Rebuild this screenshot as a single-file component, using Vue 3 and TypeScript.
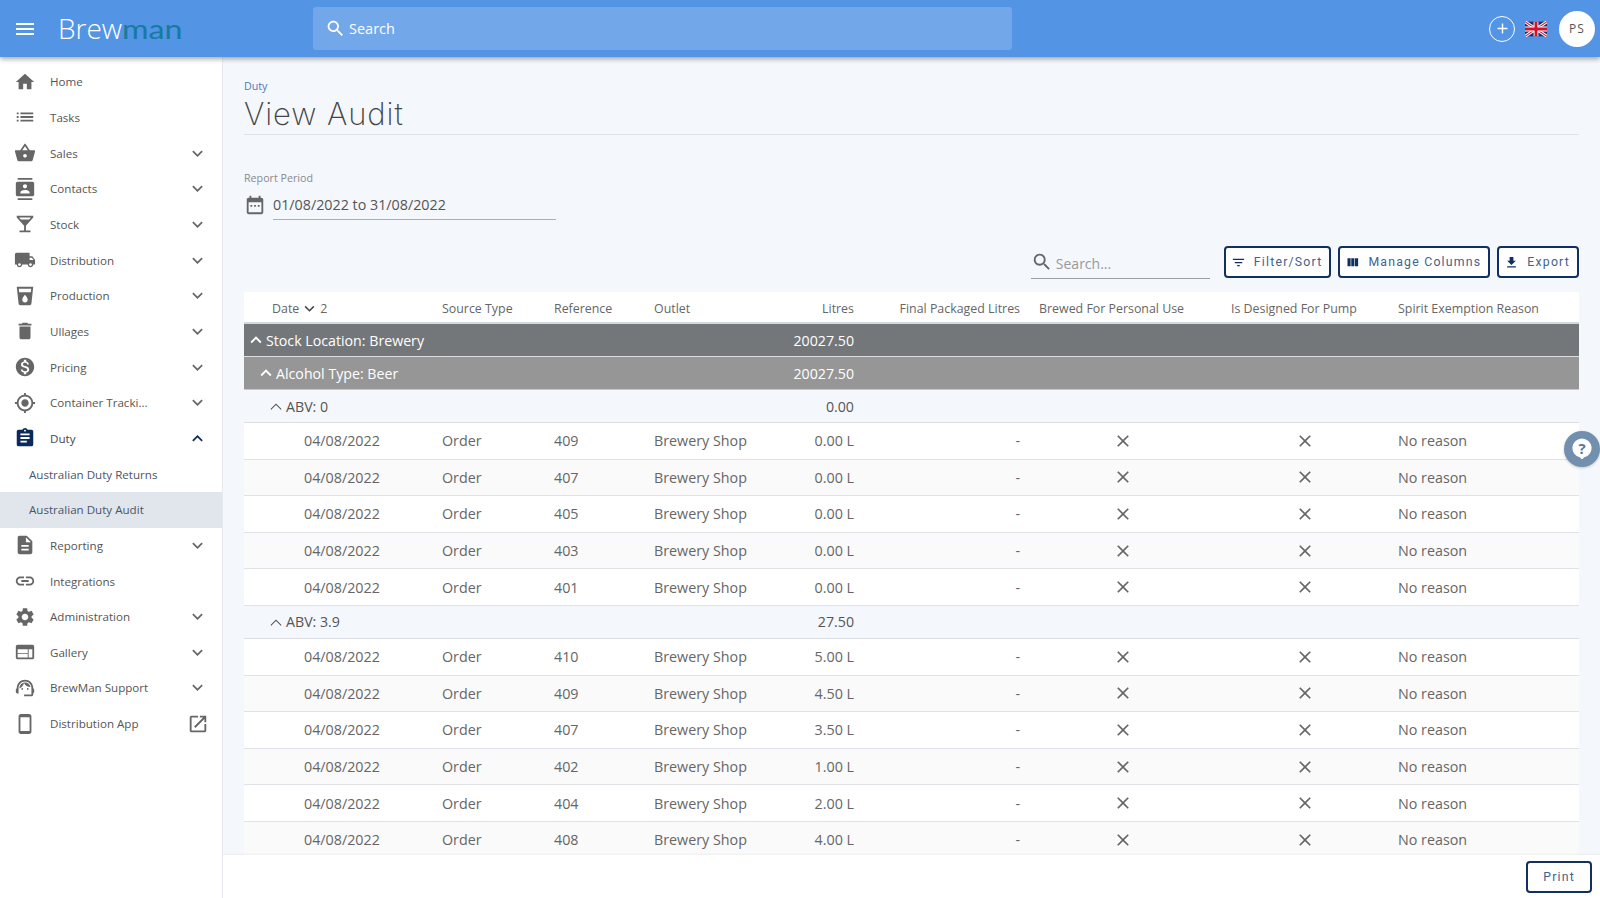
<script setup lang="ts">
interface NavItem { label: string; icon: string; chevron?: 'down' | 'up'; sub?: boolean; active?: boolean; ext?: boolean; dark?: boolean }
interface Row { kind: 'row'; ref: string; litres: string }
interface Group { kind: 'group'; level: 0 | 1 | 2; label: string; total: string }

const P: Record<string, string> = {
  menu: 'M3 18h18v-2H3v2zm0-5h18v-2H3v2zm0-7v2h18V6H3z',
  home: 'M10 20v-6h4v6h5v-8h3L12 3 2 12h3v8z',
  list: 'M3 13h2v-2H3v2zm0 4h2v-2H3v2zm0-8h2V7H3v2zm4 4h14v-2H7v2zm0 4h14v-2H7v2zM7 7v2h14V7H7z',
  basket: 'M17.21 9l-4.38-6.56c-.19-.28-.51-.42-.83-.42-.32 0-.64.14-.83.43L6.79 9H2c-.55 0-1 .45-1 1 0 .09.01.18.04.27l2.54 9.27c.23.84 1 1.46 1.92 1.46h13c.92 0 1.69-.62 1.93-1.46l2.54-9.27L23 10c0-.55-.45-1-1-1h-4.79zM9 9l3-4.4L15 9H9zm3 8c-1.1 0-2-.9-2-2s.9-2 2-2 2 .9 2 2-.9 2-2 2z',
  contacts: 'M20 0H4v2h16V0zM4 24h16v-2H4v2zM20 4H4c-1.1 0-2 .9-2 2v12c0 1.1.9 2 2 2h16c1.1 0 2-.9 2-2V6c0-1.1-.9-2-2-2zm-8 2.75c1.24 0 2.25 1.01 2.25 2.25s-1.01 2.25-2.25 2.25S9.75 10.24 9.75 9 10.76 6.75 12 6.75zM17 17H7v-1.5c0-1.67 3.33-2.5 5-2.5s5 .83 5 2.5V17z',
  bar: 'M21 5V3H3v2l8 9v5H6v2h12v-2h-5v-5l8-9zM7.43 7L5.66 5h12.69l-1.78 2H7.43z',
  truck: 'M20 8h-3V4H3c-1.1 0-2 .9-2 2v11h2c0 1.66 1.34 3 3 3s3-1.34 3-3h6c0 1.66 1.34 3 3 3s3-1.34 3-3h2v-5l-3-4zM6 18.5c-.83 0-1.5-.67-1.5-1.5s.67-1.5 1.5-1.5 1.5.67 1.5 1.5-.67 1.5-1.5 1.5zm13.5-9l1.96 2.5H17V9.5h2.5zm-1.5 9c-.83 0-1.5-.67-1.5-1.5s.67-1.5 1.5-1.5 1.5.67 1.5 1.5-.67 1.5-1.5 1.5z',
  drink: 'M3 2l2.01 18.23C5.13 21.23 5.97 22 7 22h10c1.03 0 1.87-.77 1.99-1.77L21 2H3zm9 17c-1.66 0-3-1.34-3-3 0-2 3-5.4 3-5.4s3 3.4 3 5.4c0 1.66-1.34 3-3 3zm6.33-11H5.67l-.44-4h13.53l-.43 4z',
  trash: 'M6 19c0 1.1.9 2 2 2h8c1.1 0 2-.9 2-2V7H6v12zM19 4h-3.5l-1-1h-5l-1 1H5v2h14V4z',
  money: 'M12 2C6.48 2 2 6.48 2 12s4.48 10 10 10 10-4.48 10-10S17.52 2 12 2zm1.41 16.09V20h-2.67v-1.93c-1.71-.36-3.16-1.46-3.27-3.4h1.96c.1 1.05.82 1.87 2.65 1.87 1.96 0 2.4-.98 2.4-1.59 0-.83-.44-1.61-2.67-2.14-2.48-.6-4.18-1.62-4.18-3.67 0-1.72 1.39-2.84 3.11-3.21V4h2.67v1.95c1.86.45 2.79 1.86 2.87 3.39H14.3c-.05-1.11-.64-1.87-2.22-1.87-1.5 0-2.4.68-2.4 1.64 0 .84.65 1.39 2.67 1.91s4.18 1.39 4.18 3.91c-.01 1.83-1.38 2.83-3.12 3.16z',
  gps: 'M12 8c-2.21 0-4 1.79-4 4s1.79 4 4 4 4-1.79 4-4-1.79-4-4-4zm8.94 3c-.46-4.17-3.77-7.48-7.94-7.94V1h-2v2.06C6.83 3.52 3.52 6.83 3.06 11H1v2h2.06c.46 4.17 3.77 7.48 7.94 7.94V23h2v-2.06c4.17-.46 7.48-3.77 7.94-7.94H23v-2h-2.06zM12 19c-3.87 0-7-3.13-7-7s3.13-7 7-7 7 3.13 7 7-3.13 7-7 7z',
  assign: 'M19 3h-4.18C14.4 1.84 13.3 1 12 1c-1.3 0-2.4.84-2.82 2H5c-1.1 0-2 .9-2 2v14c0 1.1.9 2 2 2h14c1.1 0 2-.9 2-2V5c0-1.1-.9-2-2-2zm-7 0c.55 0 1 .45 1 1s-.45 1-1 1-1-.45-1-1 .45-1 1-1zm2 14H7v-2h7v2zm3-4H7v-2h10v2zm0-4H7V7h10v2z',
  doc: 'M14 2H6c-1.1 0-1.99.9-1.99 2L4 20c0 1.1.89 2 1.99 2H18c1.1 0 2-.9 2-2V8l-6-6zm2 16H8v-2h8v2zm0-4H8v-2h8v2zm-3-5V3.5L18.5 9H13z',
  link: 'M3.9 12c0-1.71 1.39-3.1 3.1-3.1h4V7H7c-2.76 0-5 2.24-5 5s2.24 5 5 5h4v-1.9H7c-1.71 0-3.1-1.39-3.1-3.1zM8 13h8v-2H8v2zm9-6h-4v1.9h4c1.71 0 3.1 1.39 3.1 3.1s-1.39 3.1-3.1 3.1h-4V17h4c2.76 0 5-2.24 5-5s-2.24-5-5-5z',
  gear: 'M19.14 12.94c.04-.3.06-.61.06-.94 0-.32-.02-.64-.07-.94l2.03-1.58c.18-.14.23-.41.12-.61l-1.92-3.32c-.12-.22-.37-.29-.59-.22l-2.39.96c-.5-.38-1.03-.7-1.62-.94l-.36-2.54c-.04-.24-.24-.41-.48-.41h-3.84c-.24 0-.43.17-.47.41l-.36 2.54c-.59.24-1.13.57-1.62.94l-2.39-.96c-.22-.08-.47 0-.59.22L2.74 8.87c-.12.21-.08.47.12.61l2.03 1.58c-.05.3-.09.63-.09.94s.02.64.07.94l-2.03 1.58c-.18.14-.23.41-.12.61l1.92 3.32c.12.22.37.29.59.22l2.39-.96c.5.38 1.03.7 1.62.94l.36 2.54c.05.24.24.41.48.41h3.84c.24 0 .44-.17.47-.41l.36-2.54c.59-.24 1.13-.56 1.62-.94l2.39.96c.22.08.47 0 .59-.22l1.92-3.32c.12-.22.07-.47-.12-.61l-2.01-1.58zM12 15.6c-1.98 0-3.6-1.62-3.6-3.6s1.62-3.6 3.6-3.6 3.6 1.62 3.6 3.6-1.62 3.6-3.6 3.6z',
  web: 'M20 4H4c-1.1 0-1.99.9-1.99 2L2 18c0 1.1.9 2 2 2h16c1.1 0 2-.9 2-2V6c0-1.1-.9-2-2-2zm-5 14H4v-4h11v4zm0-5H4V9h11v4zm5 5h-4V9h4v9z',
  agent: 'M21 12.22C21 6.73 16.74 3 12 3c-4.69 0-9 3.65-9 9.28-.6.34-1 .98-1 1.72v2c0 1.1.9 2 2 2h1v-6.1c0-3.87 3.13-7 7-7s7 3.13 7 7V19h-8v2h8c1.1 0 2-.9 2-2v-1.22c.59-.31 1-.92 1-1.62v-2.3c0-.67-.41-1.28-1-1.64zM9 12a1 1 0 1 0 0 2 1 1 0 0 0 0-2zm6 0a1 1 0 1 0 0 2 1 1 0 0 0 0-2zM18 11.03C17.52 8.18 15.04 6 12.05 6c-3.03 0-6.29 2.51-6.03 6.45 2.47-1.01 4.33-3.21 4.86-5.89 1.31 2.63 4 4.44 7.12 4.47z',
  phone: 'M16.5 1h-9C6.12 1 5 2.12 5 3.5v17C5 21.88 6.12 23 7.5 23h9c1.38 0 2.5-1.12 2.5-2.5v-17C19 2.12 17.88 1 16.5 1zM17 19.5H7v-15h10v15z',
  open: 'M19 19H5V5h7V3H5c-1.11 0-2 .9-2 2v14c0 1.1.89 2 2 2h14c1.1 0 2-.9 2-2v-7h-2v7zM14 3v2h3.59l-9.83 9.83 1.41 1.41L19 6.41V10h2V3h-7z',
  down: 'M16.59 8.59L12 13.17 7.41 8.59 6 10l6 6 6-6z',
  up: 'M12 8l-6 6 1.41 1.41L12 10.83l4.59 4.58L18 14z',
  upThin: 'M12 9.2l-6 6 .8.8 5.2-5.2 5.2 5.2.8-.8z',
  search: 'M15.5 14h-.79l-.28-.27C15.41 12.59 16 11.11 16 9.5 16 5.91 13.09 3 9.5 3S3 5.91 3 9.5 5.91 16 9.5 16c1.61 0 3.09-.59 4.23-1.57l.27.28v.79l5 4.99L20.49 19l-4.99-5zm-6 0C7.01 14 5 11.99 5 9.5S7.01 5 9.5 5 14 7.01 14 9.5 11.99 14 9.5 14z',
  filter: 'M10 18h4v-2h-4v2zM3 6v2h18V6H3zm3 7h12v-2H6v2z',
  columns: 'M10 18h5V5h-5v13zm-6 0h5V5H4v13zM16 5v13h5V5h-5z',
  getapp: 'M19 9h-4V3H9v6H5l7 7 7-7zM5 18v2h14v-2H5z',
  close: 'M19 6.41L17.59 5 12 10.59 6.41 5 5 6.41 10.59 12 5 17.59 6.41 19 12 13.41 17.59 19 19 17.59 13.41 12z',
  cal: 'M19 4h-1V2h-2v2H8V2H6v2H5c-1.1 0-2 .9-2 2v14c0 1.1.9 2 2 2h14c1.1 0 2-.9 2-2V6c0-1.1-.9-2-2-2zm0 16H5V9h14v11zM7 12h2v2H7zm4 0h2v2h-2zm4 0h2v2h-2z',
  add: 'M19 13h-6v6h-2v-6H5v-2h6V5h2v6h6v2z'
}

const nav: NavItem[] = [
  { label: 'Home', icon: 'home' },
  { label: 'Tasks', icon: 'list' },
  { label: 'Sales', icon: 'basket', chevron: 'down' },
  { label: 'Contacts', icon: 'contacts', chevron: 'down' },
  { label: 'Stock', icon: 'bar', chevron: 'down' },
  { label: 'Distribution', icon: 'truck', chevron: 'down' },
  { label: 'Production', icon: 'drink', chevron: 'down' },
  { label: 'Ullages', icon: 'trash', chevron: 'down' },
  { label: 'Pricing', icon: 'money', chevron: 'down' },
  { label: 'Container Tracki...', icon: 'gps', chevron: 'down' },
  { label: 'Duty', icon: 'assign', chevron: 'up', dark: true },
  { label: 'Australian Duty Returns', icon: '', sub: true },
  { label: 'Australian Duty Audit', icon: '', sub: true, active: true },
  { label: 'Reporting', icon: 'doc', chevron: 'down' },
  { label: 'Integrations', icon: 'link' },
  { label: 'Administration', icon: 'gear', chevron: 'down' },
  { label: 'Gallery', icon: 'web', chevron: 'down' },
  { label: 'BrewMan Support', icon: 'agent', chevron: 'down' },
  { label: 'Distribution App', icon: 'phone', ext: true }
]

const rows: (Row | Group)[] = [
  { kind: 'group', level: 0, label: 'Stock Location: Brewery', total: '20027.50' },
  { kind: 'group', level: 1, label: 'Alcohol Type: Beer', total: '20027.50' },
  { kind: 'group', level: 2, label: 'ABV: 0', total: '0.00' },
  { kind: 'row', ref: '409', litres: '0.00 L' },
  { kind: 'row', ref: '407', litres: '0.00 L' },
  { kind: 'row', ref: '405', litres: '0.00 L' },
  { kind: 'row', ref: '403', litres: '0.00 L' },
  { kind: 'row', ref: '401', litres: '0.00 L' },
  { kind: 'group', level: 2, label: 'ABV: 3.9', total: '27.50' },
  { kind: 'row', ref: '410', litres: '5.00 L' },
  { kind: 'row', ref: '409', litres: '4.50 L' },
  { kind: 'row', ref: '407', litres: '3.50 L' },
  { kind: 'row', ref: '402', litres: '1.00 L' },
  { kind: 'row', ref: '404', litres: '2.00 L' },
  { kind: 'row', ref: '408', litres: '4.00 L' }
]
</script>

<template>
  <div class="app">
    <header class="topbar">
      <svg class="ico menu" viewBox="0 0 24 24"><path :d="P.menu" /></svg>
      <div class="logo">Brew<span>man</span></div>
      <div class="search">
        <svg class="ico" viewBox="0 0 24 24"><path :d="P.search" /></svg>
        <span>Search</span>
      </div>
      <div class="top-right">
        <span class="add"><svg viewBox="0 0 24 24"><path :d="P.add" /></svg></span>
        <svg class="flag" viewBox="0 0 60 40">
          <rect width="60" height="40" fill="#1f2f6e" />
          <path d="M0 0L60 40M60 0L0 40" stroke="#fff" stroke-width="8" />
          <path d="M0 0L60 40M60 0L0 40" stroke="#cf142b" stroke-width="3" />
          <path d="M30 0V40M0 20H60" stroke="#fff" stroke-width="13" />
          <path d="M30 0V40M0 20H60" stroke="#cf142b" stroke-width="8" />
        </svg>
        <span class="avatar">PS</span>
      </div>
    </header>
    <div class="body">
      <aside class="side">
        <div v-for="n in nav" :key="n.label" class="nav" :class="{ sub: n.sub, active: n.active, dark: n.dark }">
          <svg v-if="n.icon" class="nav-ico" viewBox="0 0 24 24"><path :d="P[n.icon]" /></svg>
          <span class="nav-label">{{ n.label }}</span>
          <svg v-if="n.chevron" class="nav-chev" viewBox="0 0 24 24"><path :d="P[n.chevron]" /></svg>
          <svg v-if="n.ext" class="nav-ext" viewBox="0 0 24 24"><path :d="P.open" /></svg>
        </div>
      </aside>
      <div class="content">
        <main class="page">
          <div class="crumb">Duty</div>
          <h1 class="title">View Audit</h1>
          <div class="field-label">Report Period</div>
          <div class="period">
            <svg viewBox="0 0 24 24"><path :d="P.cal" /></svg>
            <div class="period-val">01/08/2022 to 31/08/2022</div>
          </div>
          <div class="tools">
            <div class="tsearch">
              <svg viewBox="0 0 24 24"><path :d="P.search" /></svg>
              <span>Search...</span>
            </div>
            <button class="btn"><svg viewBox="0 0 24 24"><path :d="P.filter" /></svg>Filter/Sort</button>
            <button class="btn"><svg viewBox="0 0 24 24"><path :d="P.columns" /></svg>Manage Columns</button>
            <button class="btn"><svg viewBox="0 0 24 24"><path :d="P.getapp" /></svg>Export</button>
          </div>
          <div class="table">
            <div class="grid head">
              <div class="date-h">Date <svg viewBox="0 0 24 24"><path d="M5 8.6L12 15.6L19 8.6" fill="none" stroke="currentColor" stroke-width="2.4" /></svg> 2</div>
              <div>Source Type</div>
              <div>Reference</div>
              <div>Outlet</div>
              <div class="r">Litres</div>
              <div class="r">Final Packaged Litres</div>
              <div class="pl">Brewed For Personal Use</div>
              <div>Is Designed For Pump</div>
              <div>Spirit Exemption Reason</div>
            </div>
            <template v-for="(r, i) in rows" :key="i">
              <div v-if="r.kind === 'group'" class="grid group" :class="'l' + r.level">
                <div class="g-label">
                  <svg viewBox="0 0 24 24"><path :d="r.level === 2 ? P.upThin : P.up" /></svg>{{ r.label }}
                </div>
                <div class="r">{{ r.total }}</div>
              </div>
              <div v-else class="grid row" :class="{ alt: i % 2 === 0 }">
                <div class="date">04/08/2022</div>
                <div>Order</div>
                <div>{{ r.ref }}</div>
                <div>Brewery Shop</div>
                <div class="r">{{ r.litres }}</div>
                <div class="r">-</div>
                <div class="x x1"><svg viewBox="0 0 24 24"><path :d="P.close" /></svg></div>
                <div class="x x2"><svg viewBox="0 0 24 24"><path :d="P.close" /></svg></div>
                <div>No reason</div>
              </div>
            </template>
          </div>
        </main>
        <footer class="foot"><button class="btn print">Print</button></footer>
      </div>
    </div>
    <div class="help">
      <svg viewBox="0 0 24 24"><path d="M12 1.5a10.5 10.5 0 0 1 2 20.8L12 25l-2-2.7A10.5 10.5 0 0 1 12 1.5z" /></svg>
      <span>?</span>
    </div>
  </div>
</template>

<style>
html, body { margin: 0; padding: 0; background: #f4f7fc; }
</style>

<style scoped>
.app { position: relative; width: 1600px; height: 898px; overflow: hidden; display: flex; flex-direction: column; font-family: "Open Sans", "Liberation Sans", sans-serif; color: #555; background: #f4f7fc; }
.topbar { height: 57px; flex: none; background: #5394e5; display: flex; align-items: center; position: relative; z-index: 3; box-shadow: 0 2px 5px rgba(0,0,0,.35); }
.ico { fill: #fff; }
.menu { width: 24px; height: 24px; margin-left: 13px; }
.logo { margin-left: 21px; width: 255px; font-size: 28px; font-weight: 300; color: #fff; line-height: 57px; }
.logo span { display: inline-block; color: #157b9f; font-family: "Lato", sans-serif; font-weight: 400; font-size: 26px; transform: scaleX(1.24); transform-origin: left center; }
.search { width: 699px; height: 43px; background: rgba(255,255,255,.18); border-radius: 3px; display: flex; align-items: center; padding-left: 12px; box-sizing: border-box; color: #fff; font-size: 14.5px; gap: 3px; }
.search svg { width: 21px; height: 21px; }
.top-right { margin-left: auto; display: flex; align-items: center; padding-right: 5px; }
.add { width: 24px; height: 24px; border: 1px solid #fff; border-radius: 50%; display: flex; align-items: center; justify-content: center; }
.add svg { width: 17px; height: 17px; fill: #fff; }
.flag { width: 22px; height: 16px; margin-left: 10px; }
.avatar { width: 36px; height: 36px; margin-left: 12px; border-radius: 50%; background: #fff; color: #555; font-size: 12px; letter-spacing: 1px; display: flex; align-items: center; justify-content: center; }
.body { flex: 1; display: flex; min-height: 0; }
.side { width: 222px; flex: none; background: #fff; border-right: 1px solid #e6e9ee; padding-top: 7px; position: relative; z-index: 2; }
.nav { height: 35.67px; display: flex; align-items: center; padding-left: 14px; font-size: 11.6px; color: #555; position: relative; }
.nav-ico { width: 22px; height: 22px; fill: #666; flex: none; }
.dark .nav-ico { fill: #0b2a5c; }
.nav-label { margin-left: 14px; }
.dark .nav-label { color: #445; }
.sub { padding-left: 29px; color: #4a5568; }
.sub .nav-label { margin-left: 0; }
.active { background: #e1e6ec; }
.nav-chev { position: absolute; left: 187px; width: 21px; height: 21px; fill: #666; }
.dark .nav-chev { fill: #0b2a5c; }
.nav-ext { position: absolute; left: 187px; width: 22px; height: 22px; fill: #666; }
.content { flex: 1; min-width: 0; display: flex; flex-direction: column; }
.page { flex: 1; min-height: 0; overflow: hidden; padding: 0 21px; }
.crumb { margin-top: 22px; font-size: 10.7px; line-height: 14px; color: #4a7cc4; }
.title { margin: 2px 0 0; font-family: "Inter", sans-serif; font-weight: 200; font-size: 31px; line-height: 38px; color: #444; border-bottom: 1px solid #dfe3e8; padding-bottom: 1px; height: 38px; letter-spacing: .9px; }
.field-label { margin-top: 36px; font-size: 10.7px; line-height: 14px; color: #8a8a8a; }
.period { display: flex; margin-top: 6px; align-items: flex-start; gap: 7px; }
.period svg { width: 22px; height: 22px; fill: #666; margin-top: 3px; }
.period-val { width: 283px; height: 29px; line-height: 28px; font-size: 14.3px; color: #555; border-bottom: 1px solid #aab0b6; box-sizing: border-box; }
.tools { display: flex; justify-content: flex-end; align-items: flex-start; margin-top: 26px; gap: 7px; height: 46px; }
.tsearch { width: 179px; height: 33px; display: flex; align-items: center; gap: 3px; border-bottom: 1px solid #9aa0a6; color: #999; font-size: 14px; margin-right: 7px; box-sizing: border-box; }
.tsearch span { position: relative; top: 1px; }
.tsearch svg { width: 22px; height: 22px; fill: #666; }
.btn { height: 32px; padding: 0 7px 0 5px; background: #fff; border: 2px solid #12305f; border-radius: 4px; font-family: "Roboto", "Open Sans", sans-serif; font-size: 12.3px; letter-spacing: 1.2px; color: #43628c; display: inline-flex; align-items: center; gap: 8px; box-sizing: border-box; }
.btn svg { width: 15px; height: 15px; fill: #12305f; }
.grid { display: grid; grid-template-columns: 198px 112px 100px 120px 80px 166px 211px 167px 181px; align-items: center; }
.r { text-align: right; }
.pl { padding-left: 19px; }
.head { background: #fff; font-size: 12.4px; color: #666; border-bottom: 2px solid #d4d7dc; padding-top: 2px; height: 28px; box-sizing: content-box; }
.date-h { padding-left: 28px; display: flex; align-items: center; gap: 3px; }
.date-h svg { width: 15px; height: 15px; color: #444; }
.group { font-size: 14.2px; border-bottom: 1px solid #dadde2; box-sizing: border-box; }
.g-label { grid-column: 1 / span 4; display: flex; align-items: center; }
.g-label svg { width: 22px; height: 22px; fill: currentColor; margin-left: -3.5px; margin-right: -.5px; }
.l0 { height: 33px; background: #73777a; color: #fff; }
.l0 .g-label { padding-left: 4px; }
.l1 { height: 33px; background: #969696; color: #fff; border-bottom-color: #c8c8c8; }
.l1 .g-label { padding-left: 14px; }
.l2 { height: 33px; color: #555; }
.l2 .g-label { padding-left: 24px; }
.row { height: 36.6px; background: #fff; font-size: 14.3px; color: #666; border-bottom: 1px solid #dfe2e6; box-sizing: border-box; }
.alt { background: #fafafa; }
.date { padding-left: 60px; }
.x { line-height: 0; }
.x svg { width: 20px; height: 20px; fill: #666; }
.x1 { padding-left: 93px; }
.x2 { padding-left: 64px; }
.foot { height: 43px; flex: none; background: #fff; display: flex; justify-content: flex-end; align-items: center; padding-right: 8px; box-shadow: 0 -1px 2px rgba(0,0,0,.05); position: relative; }
.print { padding: 0 15px; height: 32px; }
.help { position: absolute; left: 1564px; top: 431px; width: 36px; height: 36px; border-radius: 50%; background: #7290ad; display: flex; align-items: center; justify-content: center; box-shadow: 0 1px 3px rgba(0,0,0,.2); }
.help svg { position: absolute; left: 7px; top: 6px; width: 22px; height: 22px; fill: #fff; }
.help span { position: relative; top: -1px; color: #5a7896; font-weight: 700; font-size: 15px; line-height: 1; }
</style>
